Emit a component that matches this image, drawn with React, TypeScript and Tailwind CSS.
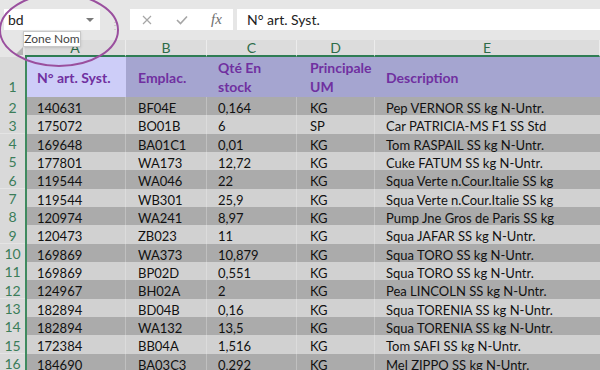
import React from 'react';

interface Row {
    id: number;
    art: string;
    emplac: string;
    qte: string;
    um: string;
    desc: string;
}

const rows: Row[] = [
    { id: 2, art: '140631', emplac: 'BF04E', qte: '0,164', um: 'KG', desc: 'Pep VERNOR SS kg N-Untr.' },
    { id: 3, art: '175072', emplac: 'BO01B', qte: '6', um: 'SP', desc: 'Car PATRICIA-MS F1 SS Std' },
    { id: 4, art: '169648', emplac: 'BA01C1', qte: '0,01', um: 'KG', desc: 'Tom RASPAIL SS kg N-Untr.' },
    { id: 5, art: '177801', emplac: 'WA173', qte: '12,72', um: 'KG', desc: 'Cuke FATUM SS kg N-Untr.' },
    { id: 6, art: '119544', emplac: 'WA046', qte: '22', um: 'KG', desc: 'Squa Verte n.Cour.Italie SS kg' },
    { id: 7, art: '119544', emplac: 'WB301', qte: '25,9', um: 'KG', desc: 'Squa Verte n.Cour.Italie SS kg' },
    { id: 8, art: '120974', emplac: 'WA241', qte: '8,97', um: 'KG', desc: 'Pump Jne Gros de Paris SS kg' },
    { id: 9, art: '120473', emplac: 'ZB023', qte: '11', um: 'KG', desc: 'Squa JAFAR SS kg N-Untr.' },
    { id: 10, art: '169869', emplac: 'WA373', qte: '10,879', um: 'KG', desc: 'Squa TORO SS kg N-Untr.' },
    { id: 11, art: '169869', emplac: 'BP02D', qte: '0,551', um: 'KG', desc: 'Squa TORO SS kg N-Untr.' },
    { id: 12, art: '124967', emplac: 'BH02A', qte: '2', um: 'KG', desc: 'Pea LINCOLN SS kg N-Untr.' },
    { id: 13, art: '182894', emplac: 'BD04B', qte: '0,16', um: 'KG', desc: 'Squa TORENIA SS kg N-Untr.' },
    { id: 14, art: '182894', emplac: 'WA132', qte: '13,5', um: 'KG', desc: 'Squa TORENIA SS kg N-Untr.' },
    { id: 15, art: '172384', emplac: 'BB04A', qte: '1,516', um: 'KG', desc: 'Tom SAFI SS kg N-Untr.' },
    { id: 16, art: '184690', emplac: 'BA03C3', qte: '0,292', um: 'KG', desc: 'Mel ZIPPO SS kg N-Untr.' },
];

const cols = 'grid grid-cols-[25px_101px_81px_90px_78px_1fr]';
const letters = ['A', 'B', 'C', 'D', 'E'];

export default function App() {
    return (
        <div className="relative w-[600px] h-[370px] overflow-hidden bg-white font-['Lato',sans-serif]">
            {/* Formula bar */}
            <div className="flex h-[40px] bg-[#e6e6e6] pt-[9px]">
                <div className="ml-[4px] flex h-[21px] w-[96px] items-center justify-between bg-white pl-[4px] pr-[6px] text-[14px] text-[#222]">
                    <span>bd</span>
                    <span className="h-0 w-0 border-x-[4px] border-t-[4px] border-x-transparent border-t-[#7a7a7a]"></span>
                </div>
                <div className="flex w-[30px] items-center justify-center text-[10px] leading-none text-[#b8b8b8]">⋮</div>
                <div className="flex h-[21px] w-[103px] items-center bg-white text-[#a6a6a6]">
                    <svg className="ml-[12px] h-[10px] w-[10px]" viewBox="0 0 10 10" fill="none" stroke="currentColor" strokeWidth={1.2}>
                        <path d="M1 1l8 8M9 1l-8 8" />
                    </svg>
                    <svg className="ml-[24px] h-[10px] w-[12px]" viewBox="0 0 12 10" fill="none" stroke="currentColor" strokeWidth={1.6}>
                        <path d="M1 5l3.5 3.5L11 1.5" />
                    </svg>
                    <span className="ml-[23px] font-['Liberation_Serif',serif] text-[15px] italic text-[#6e6e6e]">fx</span>
                </div>
                <div className="ml-[4px] flex h-[21px] flex-1 items-center bg-white pl-[10px] text-[14px] text-[#222]">
                    N° art. Syst.
                </div>
            </div>

            {/* Column headers */}
            <div className={`${cols} h-[17px] bg-[#dcdcdc] text-[14px] leading-none`}>
                <div className="flex items-end justify-end bg-[#e6e6e6] pb-[2px] pr-[2px]">
                    <svg width="8" height="8" viewBox="0 0 8 8">
                        <path d="M8 0V8H0Z" fill="#b4b4b4" />
                    </svg>
                </div>
                {letters.map((l) => (
                    <div key={l} className="flex items-center justify-center border-b-2 border-r border-b-[#2f7d54] border-r-[#ececec] text-[#2d6b48]">
                        {l}
                    </div>
                ))}
            </div>

            {/* Header row 1 */}
            <div className={`${cols} h-[40px] text-[14px] font-bold leading-[19px] text-[#7030a0]`}>
                <div className="flex items-end justify-center bg-[#d9d9d9] pb-[1px] text-[14px] font-normal text-[#3b7d59]">1</div>
                <div className="flex items-center border-l-2 border-[#3f8a5f] bg-[#cdcdf8] pl-[10px]">N° art. Syst.</div>
                <div className="flex items-center bg-[#a5a5d0] pl-[12px]">Emplac.</div>
                <div className="flex items-center bg-[#a5a5d0] pl-[11px]">Qté En<br />stock</div>
                <div className="flex items-center bg-[#a5a5d0] pl-[13px]">Principale<br />UM</div>
                <div className="flex items-center bg-[#a5a5d0] pl-[11px]">Description</div>
            </div>

            {/* Data rows */}
            {rows.map((r) => {
                const bg = r.id % 2 === 0 ? 'bg-[#ababab]' : 'bg-[#d1d1d1]';
                return (
                    <div key={r.id} className={`${cols} h-[18.33px] text-[13px] leading-[15px] text-[#111]`}>
                        <div className="flex items-center justify-center border-b border-[#e4e4e4] bg-[#d9d9d9] pt-[2px] text-[14px] text-[#3b7d59]">{r.id}</div>
                        <div className={`flex items-center border-l-2 border-r border-l-[#3f8a5f] border-r-white/25 pl-[10px] pt-[4px] ${bg}`}>{r.art}</div>
                        <div className={`flex items-center border-r border-white/25 pl-[12px] pt-[4px] ${bg}`}>{r.emplac}</div>
                        <div className={`flex items-center border-r border-white/25 pl-[11px] pt-[4px] ${bg}`}>{r.qte}</div>
                        <div className={`flex items-center border-r border-white/25 pl-[13px] pt-[4px] ${bg}`}>{r.um}</div>
                        <div className={`flex items-center whitespace-nowrap pl-[11px] pt-[4px] ${bg}`}>{r.desc}</div>
                    </div>
                );
            })}

            {/* Name box tooltip */}
            <div className="absolute left-[23px] top-[31px] flex h-[16px] w-[58px] items-center justify-center border border-[#c8c8c8] bg-white text-[12px] text-[#444] shadow-sm">
                Zone Nom
            </div>

            {/* Highlight ellipse */}
            <svg className="pointer-events-none absolute left-0 top-0" width="130" height="75" viewBox="0 0 130 75" fill="none">
                <ellipse cx="59" cy="30" rx="59" ry="36" stroke="#9a4f9e" strokeWidth={2} />
            </svg>
        </div>
    );
}
